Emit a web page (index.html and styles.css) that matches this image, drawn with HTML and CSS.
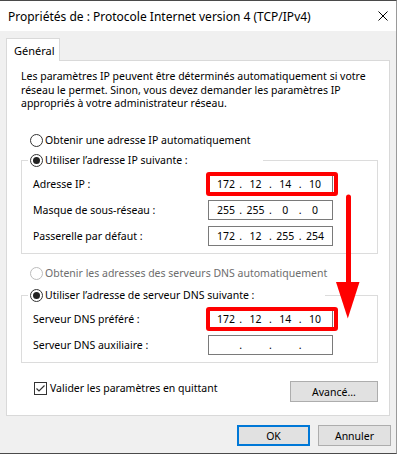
FILE: index.html
```html
<!DOCTYPE html>
<html lang="fr">
  <head>
    <meta charset="UTF-8" />
    <meta name="viewport" content="width=device-width, initial-scale=1.0" />
    <title>Propriétés de : Protocole Internet version 4 (TCP/IPv4)</title>
    <link rel="stylesheet" href="styles.css">
  </head>
  <body>
    <div class="window">
      <div class="titlebar">
        <span class="title">Propriétés de : Protocole Internet version 4 (TCP/IPv4)</span>
        <svg class="close" width="10" height="10" viewBox="0 0 10 10">
          <path d="M0.5 0.5 L9.5 9.5 M9.5 0.5 L0.5 9.5" stroke="#000" stroke-width="1" fill="none" />
        </svg>
      </div>

      <div class="content">
        <div class="tabs">
          <div class="tab">Général</div>
        </div>

        <div class="panel">
          <p class="intro">
            Les paramètres IP peuvent être déterminés automatiquement si votre
            réseau le permet. Sinon, vous devez demander les paramètres IP
            appropriés à votre administrateur réseau.
          </p>

          <div class="radio first">
            <span class="circle"></span>
            <span>Obtenir une adresse IP automatiquement</span>
          </div>

          <div class="group">
            <div class="legend ip-legend">
              <div class="radio">
                <span class="circle checked"></span>
                <span>Utiliser l’adresse IP suivante :</span>
              </div>
            </div>
            <div class="rows">
              <div class="row">
                <span class="label">Adresse IP :</span>
                <div class="field marked">
                  <span class="oct">172</span><span class="dot">.</span><span class="oct">12</span><span class="dot">.</span><span class="oct">14</span><span class="dot">.</span><span class="oct">10</span>
                </div>
              </div>
              <div class="row">
                <span class="label">Masque de sous-réseau :</span>
                <div class="field">
                  <span class="oct">255</span><span class="dot">.</span><span class="oct">255</span><span class="dot">.</span><span class="oct">0</span><span class="dot">.</span><span class="oct">0</span>
                </div>
              </div>
              <div class="row">
                <span class="label">Passerelle par défaut :</span>
                <div class="field">
                  <span class="oct">172</span><span class="dot">.</span><span class="oct">12</span><span class="dot">.</span><span class="oct">255</span><span class="dot">.</span><span class="oct">254</span>
                </div>
              </div>
            </div>
          </div>

          <div class="radio disabled">
            <span class="circle"></span>
            <span>Obtenir les adresses des serveurs DNS automatiquement</span>
          </div>

          <div class="group dns">
            <div class="legend dns-legend">
              <div class="radio">
                <span class="circle checked"></span>
                <span>Utiliser l’adresse de serveur DNS suivante :</span>
              </div>
            </div>
            <div class="rows">
              <div class="row">
                <span class="label">Serveur DNS préféré :</span>
                <div class="field marked">
                  <span class="oct">172</span><span class="dot">.</span><span class="oct">12</span><span class="dot">.</span><span class="oct">14</span><span class="dot">.</span><span class="oct">10</span>
                </div>
              </div>
              <div class="row">
                <span class="label">Serveur DNS auxiliaire :</span>
                <div class="field">
                  <span class="oct"></span><span class="dot">.</span><span class="oct"></span><span class="dot">.</span><span class="oct"></span><span class="dot">.</span><span class="oct"></span>
                </div>
              </div>
            </div>
          </div>

          <div class="panel-foot">
            <div class="check">
              <svg class="box" width="13" height="13" viewBox="0 0 13 13">
                <rect x="0.5" y="0.5" width="12" height="12" fill="#fff" stroke="#333" />
                <path d="M2.5 6.5 L5 9 L10.5 3.5" stroke="#333" stroke-width="1.2" fill="none" />
              </svg>
              <span>Valider les paramètres en quittant</span>
            </div>
            <button class="btn advanced">Avancé...</button>
          </div>
        </div>

        <div class="actions">
          <button class="btn default">OK</button>
          <button class="btn">Annuler</button>
        </div>
      </div>

      <!-- annotation arrow -->
      <svg class="arrow" width="397" height="454" viewBox="0 0 397 454">
        <line x1="348.5" y1="197" x2="348.5" y2="284" stroke="#f00" stroke-width="5" stroke-linecap="round" />
        <polygon points="336,282 359.5,282 347.8,318.5" fill="#f00" />
      </svg>
    </div>
  </body>
</html>
```

FILE: styles.css
```css
body {
  margin: 0;
  background: #fff;
  font-family: "Noto Sans", "Liberation Sans", sans-serif;
  font-size: 10.5px;
  color: #000;
}
.window {
  position: relative;
  box-sizing: border-box;
  width: 397px;
  height: 454px;
  background: #f0f0f0;
  border-top: 1px solid #4a4a4a;
  border-right: 1px solid #9a9a9a;
  border-bottom: 1px solid #4a4a4a;
}
.titlebar {
  display: flex;
  align-items: center;
  height: 30px;
  padding: 0 8px;
  background: #fff;
}
.title {
  font-size: 12px;
}
.close {
  margin-left: auto;
  margin-top: -1px;
}
.content {
  padding-top: 7px;
}
.tabs {
  display: flex;
  padding-left: 6px;
}
.tab {
  position: relative;
  z-index: 1;
  box-sizing: border-box;
  width: 54px;
  height: 23px;
  margin-bottom: -1px;
  padding: 4px 0 0 7px;
  background: #fff;
  border: 1px solid #d9d9d9;
  border-bottom: none;
  font-size: 11px;
}
.panel {
  box-sizing: border-box;
  width: 384px;
  margin-left: 6px;
  padding: 9px 11px 13px 14px;
  background: #fff;
  border: 1px solid #d9d9d9;
}
.intro {
  margin: 0;
  line-height: 13.7px;
}
.radio {
  display: flex;
  align-items: center;
  height: 16px;
}
.radio.first {
  margin: 21px 0 0 9px;
}
.radio.disabled {
  margin: 11px 0 0 9px;
  color: #6d6d6d;
}
.circle {
  box-sizing: border-box;
  width: 13px;
  height: 13px;
  margin-right: 2px;
  border: 1px solid #333;
  border-radius: 50%;
  display: flex;
  align-items: center;
  justify-content: center;
  background: #fff;
}
.circle.checked::after {
  content: "";
  width: 7px;
  height: 7px;
  border-radius: 50%;
  background: #222;
}
.disabled .circle {
  border-color: #bcbcbc;
}
.group {
  margin-top: 12px;
  border: 1px solid #dcdcdc;
}
.group.dns {
  margin-top: 14px;
}
.legend {
  margin: -9px 0 0 6px;
  padding-left: 2px;
  background: #fff;
}
.ip-legend {
  width: 233px;
}
.dns-legend {
  width: 295px;
}
.rows {
  display: flex;
  flex-direction: column;
  gap: 6px;
  padding: 6px 0 7px 11px;
}
.row {
  display: flex;
  align-items: center;
  height: 20px;
}
.label {
  width: 175px;
}
.field {
  position: relative;
  box-sizing: border-box;
  display: flex;
  align-items: center;
  width: 125px;
  height: 20px;
  padding: 0 6px;
  border: 1px solid #7a7a7a;
  background: #fff;
}
.field.marked::after {
  content: "";
  position: absolute;
  top: -3px;
  left: -3px;
  right: -6px;
  bottom: -3px;
  border: 4px solid #f00;
  border-radius: 3px;
}
.oct {
  width: 22px;
  text-align: center;
}
.dot {
  width: 8px;
  text-align: center;
}
.panel-foot {
  display: flex;
  align-items: flex-start;
  margin-top: 17px;
}
.check {
  display: flex;
  align-items: center;
  height: 16px;
  margin-left: 13px;
}
.box {
  margin-right: 3px;
}
.btn {
  box-sizing: border-box;
  height: 21px;
  padding: 0;
  font-family: inherit;
  font-size: 10.5px;
  color: #000;
  background: #e1e1e1;
  border: 1px solid #adadad;
}
.advanced {
  width: 88px;
  margin: 1px 0 0 auto;
}
.actions {
  display: flex;
  justify-content: flex-end;
  gap: 8px;
  margin-top: 9px;
  padding-right: 5px;
}
.actions .btn {
  width: 73px;
}
.btn.default {
  border: 2px solid #0078d7;
}
.arrow {
  position: absolute;
  top: -1px;
  left: 0;
  pointer-events: none;
}
```
